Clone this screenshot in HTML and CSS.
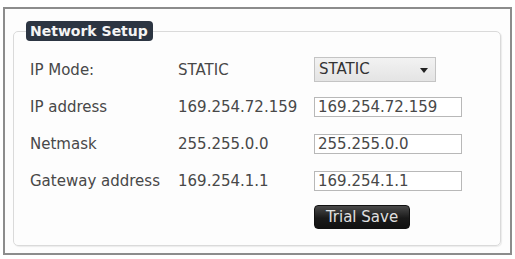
FILE: index.html
```html
<!DOCTYPE html>
<html lang="en">
<head>
	<meta charset="UTF-8">
	<meta name="viewport" content="width=device-width, initial-scale=1.0">
	<title>Network Setup</title>
	<link rel="stylesheet" href="styles.css">
</head>
<body>
	<div class="panel">
		<fieldset class="setup">
			<legend>Network Setup</legend>
			<div class="rows">
				<div class="label">IP Mode:</div>
				<div class="value">STATIC</div>
				<div class="field">
					<div class="select">STATIC<span class="arrow"></span></div>
				</div>

				<div class="label">IP address</div>
				<div class="value">169.254.72.159</div>
				<div class="field"><input type="text" value="169.254.72.159"></div>

				<div class="label">Netmask</div>
				<div class="value">255.255.0.0</div>
				<div class="field"><input type="text" value="255.255.0.0"></div>

				<div class="label">Gateway address</div>
				<div class="value">169.254.1.1</div>
				<div class="field"><input type="text" value="169.254.1.1"></div>

				<div></div>
				<div></div>
				<div class="field"><button class="save">Trial Save</button></div>
			</div>
		</fieldset>
	</div>
</body>
</html>
```

FILE: styles.css
```css
* {
	box-sizing: border-box;
}

body {
	margin: 0;
	background: #fff;
	font-family: "DejaVu Sans", Verdana, sans-serif;
	font-size: 15px;
	color: #484848;
}

.panel {
	width: 509px;
	height: 248px;
	margin: 7px 0 0 3px;
	border: 2px solid #8c8c8c;
	padding: 0 9px 0 8px;
	background: #fdfdfd;
}

.setup {
	margin: 12px 0 0 0;
	height: 225px;
	border: 1px solid #dadada;
	border-radius: 5px;
	padding: 0 0 0 16px;
	box-shadow: 1px 1px 1px #ececec;
}

.setup legend {
	margin-left: -4px;
	padding: 2px 5px 2px 4px;
	background: #2c3542;
	color: #f4f4f4;
	font-weight: bold;
	font-size: 14px;
	border-radius: 4px;
}

.rows {
	display: grid;
	grid-template-columns: 148px 136px 1fr;
	grid-auto-rows: 37px;
	align-items: center;
	margin-top: 10px;
}

.field input {
	width: 148px;
	height: 20px;
	border: 1px solid #b8b8b8;
	padding: 0 3px;
	font-family: inherit;
	font-size: 15px;
	color: #484848;
}

.select {
	width: 122px;
	height: 25px;
	border: 1px solid #c4c4c4;
	background: linear-gradient(#f2f2f2, #e4e4e4);
	padding: 2px 4px;
	position: relative;
	color: #333;
}

.arrow {
	position: absolute;
	right: 7px;
	top: 10px;
	border-left: 4px solid transparent;
	border-right: 4px solid transparent;
	border-top: 5px solid #222;
}

.save {
	width: 96px;
	height: 24px;
	margin-top: -2px;
	border: 1px solid #111;
	border-radius: 4px;
	background: linear-gradient(#4a4a4a, #1a1a1a 55%, #111);
	color: #e0e0e0;
	font-family: inherit;
	font-size: 15px;
	padding: 0;
}
```
